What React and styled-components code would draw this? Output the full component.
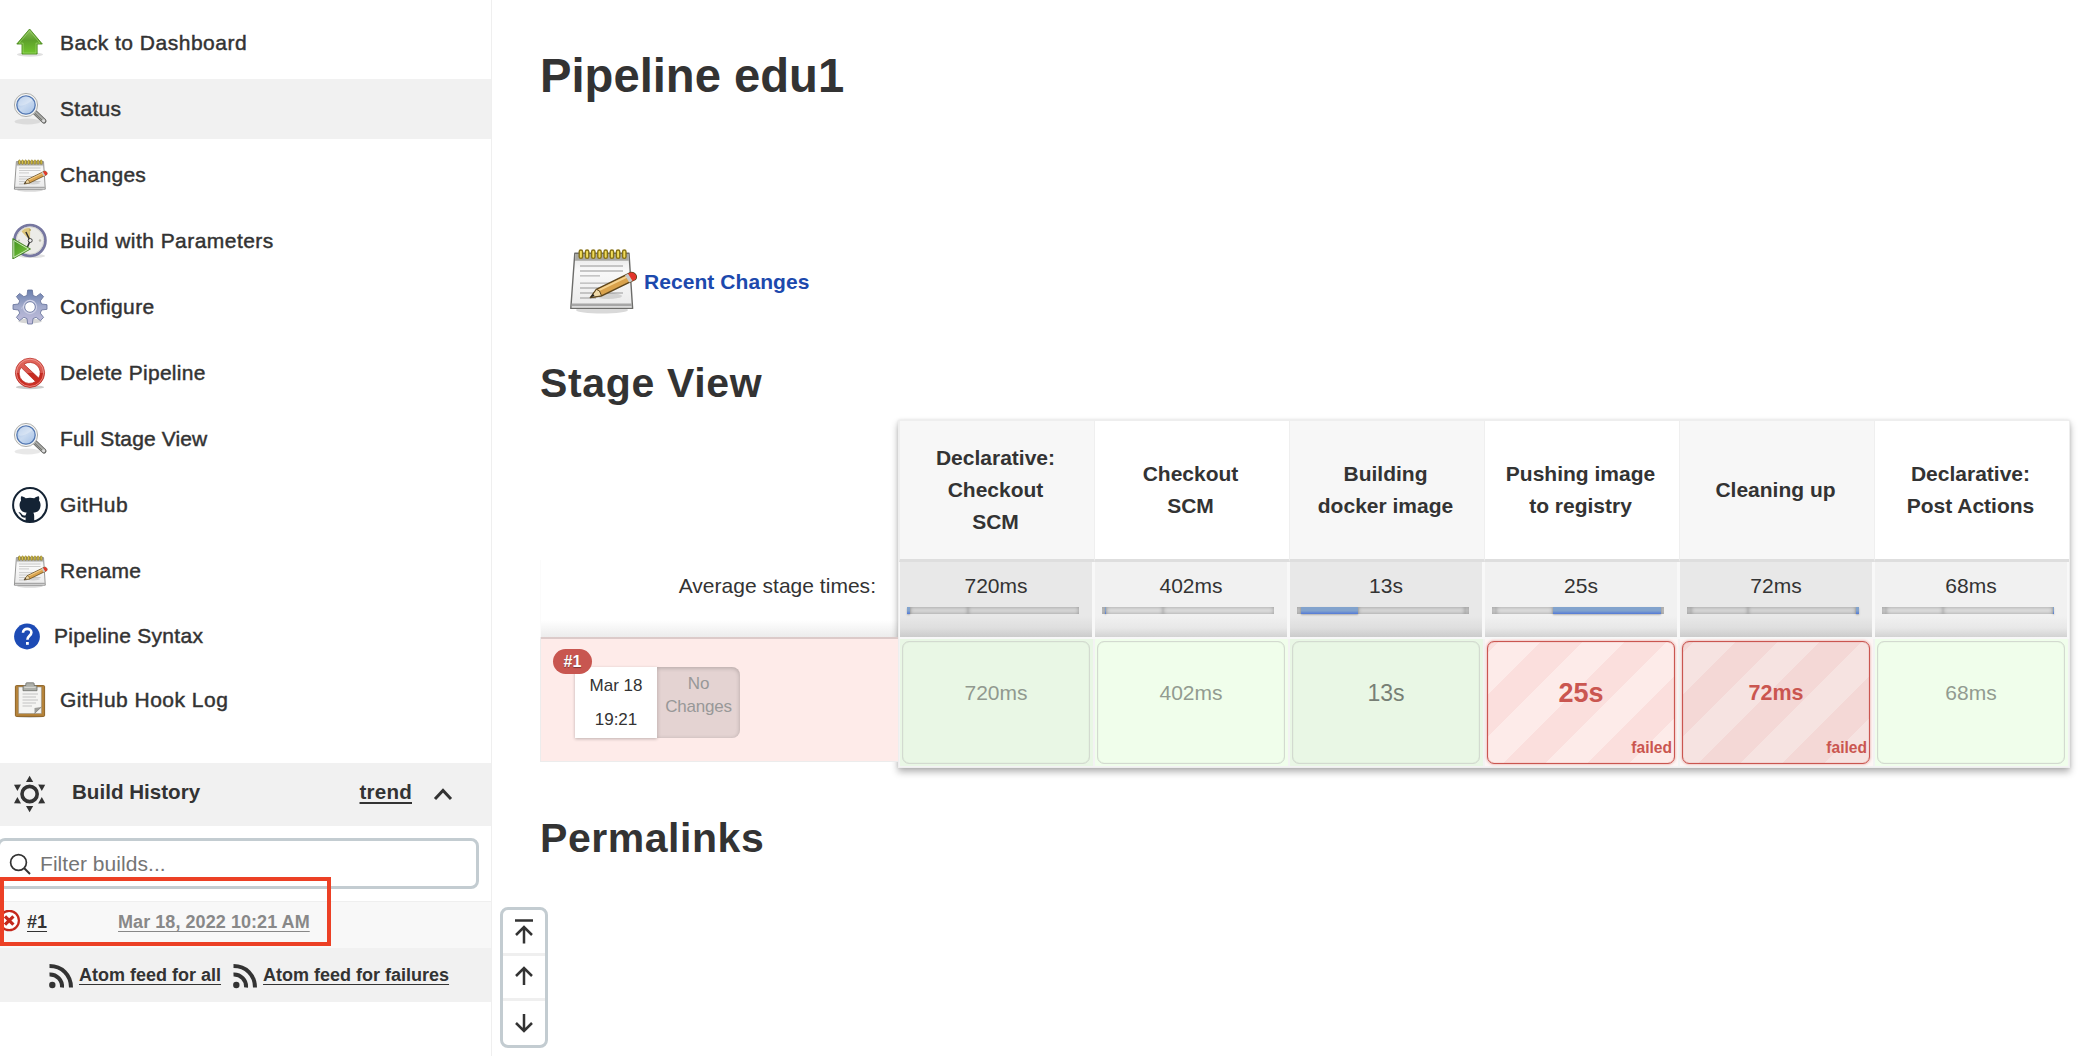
import React from "react";
import styled, { createGlobalStyle, css } from "styled-components";

const GlobalStyle = createGlobalStyle`
  *, *::before, *::after { box-sizing: border-box; }
  body {
    margin: 0;
    background: #fff;
    color: #333;
    font-family: "Liberation Sans", Arial, sans-serif;
    font-size: 21px;
    overflow: hidden;
  }
`;

/* ---------- layout ---------- */

const Page = styled.div`
  position: relative;
  display: flex;
  width: 2092px;
  height: 1056px;
  overflow: hidden;
`;

const Sidebar = styled.aside`
  flex: 0 0 492px;
  border-right: 1px solid #efefef;
  padding-top: 13px;
`;

const Main = styled.main`
  flex: 1;
  padding: 46px 22px 0 48px;
`;

/* ---------- task list ---------- */

const TaskList = styled.nav`
  display: flex;
  flex-direction: column;
  gap: 6px;
  height: 750px;
`;

const Task = styled.a`
  display: flex;
  align-items: center;
  flex: none;
  height: ${(p) => p.$height || 60}px;
  padding-left: 12px;
  gap: 12px;
  background: ${(p) => (p.$active ? "#f1f1f1" : "transparent")};
  letter-spacing: ${(p) => p.$track ?? 0.3}px;
  -webkit-text-stroke: 0.45px #333;
  svg { flex: none; }
`;

/* ---------- build history ---------- */

const HistoryHeader = styled.div`
  display: flex;
  align-items: center;
  height: 63px;
  padding: 0 38px 2px 12px;
  background: #f1f1f1;
  font-weight: bold;
  font-size: 20.6px;
`;

const HistoryTitle = styled.span`
  margin: -4px auto 0 24px;
`;

const TrendLink = styled.a`
  margin: -4px 21px 0 0;
  letter-spacing: 0.2px;
  text-decoration: underline;
  text-decoration-thickness: 2px;
  text-underline-offset: 3px;
`;

const FilterBox = styled.div`
  display: flex;
  align-items: center;
  width: 482px;
  height: 51px;
  margin: 12px 0 12px -3px;
  padding-left: 9px;
  border: 3px solid #c3ccd1;
  border-radius: 8px;
  gap: 9px;
  color: #757575;
  letter-spacing: 0.05px;
  span { padding-top: 1px; }
`;

const BuildRow = styled.div`
  display: flex;
  align-items: center;
  height: 47px;
  padding-bottom: 6px;
  border-top: 1px solid #efefef;
  background: #f8f8f8;
  font-weight: bold;
  font-size: 18px;
`;

const BuildLink = styled.a`
  margin-left: 7px;
  text-decoration: underline;
  text-decoration-thickness: 1px;
  text-underline-offset: 3px;
`;

const BuildDate = styled(BuildLink)`
  margin-left: 71px;
  color: #888;
  letter-spacing: 0.06px;
`;

const Feeds = styled.div`
  display: flex;
  align-items: center;
  height: 54px;
  padding: 1px 0 0 48px;
  background: #f1f1f1;
  font-weight: bold;
  font-size: 18px;
`;

const FeedLink = styled.a`
  margin: 0 11px 0 5px;
  text-decoration: underline;
  text-decoration-thickness: 1px;
  text-underline-offset: 3px;
`;

const Highlight = styled.div`
  position: absolute;
  left: 0;
  top: 877px;
  width: 331px;
  height: 69px;
  border: 4px solid #ec4025;
`;

/* ---------- floating scroller ---------- */

const Scroller = styled.div`
  position: absolute;
  left: 500px;
  top: 907px;
  width: 48px;
  height: 141px;
  display: grid;
  grid-template-rows: 43px 45px 47px;
  border: 3px solid #c3ccd1;
  border-radius: 8px;
  background: #fff;
`;

const ScrollButton = styled.div`
  display: flex;
  align-items: center;
  justify-content: center;
  & + & { border-top: 3px solid #efefef; }
`;

/* ---------- main column ---------- */

const Title = styled.h1`
  height: 60px;
  margin: 0 0 140px;
  font-size: 47.2px;
  line-height: 60px;
`;

const Recent = styled.a`
  display: flex;
  align-items: center;
  height: 72px;
  margin-bottom: 40px;
  padding-left: 26px;
  gap: 6px;
  color: #1c49ad;
  font-weight: bold;
  letter-spacing: 0.06px;
  svg { margin-top: -4px; }
`;

const SectionTitle = styled.h2`
  height: 50px;
  margin: 0;
  font-size: 41px;
  line-height: 50px;
  letter-spacing: ${(p) => p.$track || 0}px;
`;

const StageView = styled.section`
  display: flex;
  width: 1530px;
  height: 349px;
  margin: 11px 0 45px;
`;

const RunColumn = styled.div`
  flex: 0 0 358px;
  padding-top: 141px;
`;

const AverageLabel = styled.div`
  height: 77px;
  padding: 14px 22px 0 0;
  line-height: 24px;
  text-align: right;
  border-left: 1px solid #fbfbfb;
  background: linear-gradient(#fff 78%, #ececec);
  letter-spacing: 0.02px;
`;

const RunSummary = styled.div`
  position: relative;
  height: 125px;
  padding: 30px 0 0 34px;
  border: solid #ececec;
  border-width: 0 0 1px 1px;
  background: #feebe9;
  box-shadow: inset 0 2px 0 #dccac9;
`;

const RunBadge = styled.span`
  position: absolute;
  left: 12px;
  top: 12px;
  width: 39px;
  height: 25px;
  border-radius: 13px;
  background: #c85650;
  color: #fff;
  font: bold 16px/25px "Liberation Sans", Arial, sans-serif;
  text-align: center;
  text-shadow: 0 1px 1px rgba(0, 0, 0, 0.4);
`;

const RunInfo = styled.div`
  display: flex;
  height: 71px;
  font-size: 17px;
  text-align: center;
`;

const RunDate = styled.div`
  width: 82px;
  padding-top: 2px;
  background: #fff;
  line-height: 34px;
  box-shadow: 0 1px 3px rgba(0, 0, 0, 0.25);
`;

const RunChanges = styled.div`
  width: 83px;
  padding: 5px 8px 0;
  border-radius: 0 8px 8px 0;
  background: #e4d3d2;
  color: #989898;
  line-height: 23px;
  letter-spacing: -0.2px;
  box-shadow: inset 0 1px 4px rgba(0, 0, 0, 0.22);
`;

const StageTable = styled.div`
  width: 1172px;
  height: 348px;
  margin-top: 1px;
  display: grid;
  grid-template-columns: repeat(6, 195px);
  grid-template-rows: 141px 77px 128px;
  border: 1px solid #eee;
  background: #fff;
  box-shadow: 0 4px 7px rgba(0, 0, 0, 0.3), 0 0 3px rgba(0, 0, 0, 0.1);
`;

const HeadCell = styled.div`
  display: flex;
  align-items: center;
  justify-content: center;
  padding: 0 21px 0 18px;
  border-left: 1px solid #efefef;
  border-bottom: 3px solid #dedede;
  background: ${(p) => (p.$alt ? "#f7f7f7" : "#fff")};
  font-weight: bold;
  font-size: 21px;
  line-height: 31.8px;
  text-align: center;
  white-space: pre;
`;

const AverageCell = styled.div`
  padding: 11px 13px 0 7px;
  border: solid #f8f8f8;
  border-width: 0 2px 2px 1px;
  background: linear-gradient(
    ${(p) => (p.$alt ? "#e8e8e8 72%, #dedede 88%, #cbcbcb" : "#f1f1f1 72%, #e8e8e8 88%, #d2d2d2")}
  );
`;

const AverageTime = styled.div`
  padding-left: 6px;
  line-height: 26px;
  text-align: center;
`;

const Timeline = styled.div`
  display: flex;
  height: 7px;
  margin-top: 8px;
  background: ${(p) => (p.$alt ? "#dadada" : "#e0e0e0")};
`;

const Segment = styled.div`
  flex: ${(p) => p.$size} 0 0;
  ${(p) =>
    p.$fill
      ? css`
          background: linear-gradient(#82a3cd 55%, #5379d6);
          box-shadow: 0 1px 2px rgba(0, 0, 0, 0.25);
        `
      : css`
          box-shadow: inset 0 0 4px rgba(0, 0, 0, 0.32);
        `}
`;

const ResultCell = styled.div`
  padding: 2px 3px 2px 2px;
  border: solid #f3f3f3;
  border-width: 0 1px 1px 1px;
  background: ${(p) => (p.$failed ? "#fdf6f5" : p.$alt ? "#e9f7e5" : "#f0feeb")};
`;

const stripes = (light, dark) =>
  `repeating-linear-gradient(135deg, ${dark} 0 7.3px, ${light} 7.3px 37px, ${dark} 37px 59.4px)`;

const ResultCard = styled.div`
  position: relative;
  height: 123px;
  padding-top: 37px;
  border: 1px solid #d3dad0;
  box-shadow: inset 0 0 1px rgba(0, 0, 0, 0.2);
  border-radius: 7px;
  background: ${(p) => (p.$alt ? "#e9f7e5" : "#f0feeb")};
  color: ${(p) => p.$color};
  font-size: ${(p) => p.$size}px;
  line-height: 28px;
  text-align: center;
  ${(p) =>
    p.$failed &&
    css`
      border-color: #ca5650;
      background: ${p.$alt ? stripes("#f6e3e1", "#f4d8d6") : stripes("#fdebe9", "#fbdfdd")};
      box-shadow: 0 0 3px rgba(202, 86, 80, 0.6), inset 0 0 1px #ca5650;
      font-weight: bold;
    `}
`;

const FailedTag = styled.span`
  position: absolute;
  right: 2px;
  bottom: 1px;
  font-size: 15.6px;
`;

/* ---------- icons ---------- */

const UpArrowIcon = () => (
  <svg width="36" height="36" viewBox="0 0 36 36">
    <defs>
      <linearGradient id="up" x1="0" y1="0" x2="0" y2="1">
        <stop offset="0" stopColor="#8fbf60" /><stop offset=".45" stopColor="#5da02b" /><stop offset="1" stopColor="#72c62e" />
      </linearGradient>
    </defs>
    <ellipse cx="18" cy="29.5" rx="13" ry="2.2" fill="#000" opacity=".12" />
    <path d="M17.6 4 30.3 19h-5.2v10H10V19H4.8z" fill="url(#up)" stroke="#4a8a1c" strokeWidth=".9" />
    <path d="M17.6 5.8 28 18.1h-4v9.9H11.1v-9.9H7z" fill="none" stroke="#a7dc78" strokeWidth=".7" opacity=".8" />
  </svg>
);

const MagnifierIcon = () => (
  <svg width="36" height="36" viewBox="0 0 36 36">
    <defs>
      <linearGradient id="lens" x1="0" y1="0" x2=".8" y2="1">
        <stop offset="0" stopColor="#9dbbe4" /><stop offset=".55" stopColor="#c9daf0" /><stop offset="1" stopColor="#a9c4e8" />
      </linearGradient>
    </defs>
    <ellipse cx="15.5" cy="30.5" rx="13" ry="3" fill="#000" opacity=".09" />
    <path d="m22.5 21 9.5 9" stroke="#5d5d5b" strokeWidth="5" strokeLinecap="round" />
    <path d="m22.5 21 9.3 8.8" stroke="#a9aaa6" strokeWidth="3.4" strokeLinecap="round" />
    <path d="m23 22.4 7.3 7" stroke="#6e6f6c" strokeWidth="1" />
    <circle cx="31.6" cy="29.7" r="1.5" fill="#ddd" />
    <circle cx="14" cy="14" r="11.6" fill="#f5f5f3" stroke="#9b9c99" strokeWidth=".8" />
    <circle cx="14" cy="14" r="9.2" fill="url(#lens)" stroke="#5277b2" strokeWidth="1.3" />
    <path d="M6.5 14c3 2 9-1 14-5-2.500-3.500-7-4.500-10-3-2.600 1.400-4 4-4 8z" fill="#fff" opacity=".3" />
  </svg>
);

const NotepadIcon = ({ size = 36 }) => (
  <svg width={size} height={size} viewBox="0 0 36 36">
    <defs>
      <linearGradient id="paper" x1="0" y1="0" x2="0" y2="1">
        <stop offset="0" stopColor="#e4e4e4" /><stop offset=".3" stopColor="#f9f9f9" /><stop offset="1" stopColor="#eaeaea" />
      </linearGradient>
    </defs>
    <ellipse cx="18" cy="33" rx="13" ry="1.800" fill="#000" opacity=".15" />
    <path d="M4.400 4.600 31.500 4.600 33.300 32.200H2.400z" fill="url(#paper)" stroke="#6c6c6a" strokeWidth=".7" strokeLinejoin="round" />
    <path d="M4.700 5h26.500l.2 3.400H4.500z" fill="#a8a8a4" />
    <path d="M2.900 29.800h30v1.300h-30z" fill="#a6a6a6" />
    <path d="M7 11h21.500M7 13.500h21.500M7 15.900h10M7 19.600h15M7 22h12M7 24.500h21.500M7 27h8" stroke="#b5b5b5" strokeWidth=".65" />
    {[6.6, 9.7, 12.8, 15.9, 19, 22.1, 25.2, 28.3].map((x) => (
      <rect key={x} x={x} y="3" width="1.700" height="4.200" rx=".85" fill="#f0dc5a" stroke="#857014" strokeWidth=".7" />
    ))}
    <ellipse cx="21" cy="26" rx="7" ry="1.500" fill="#000" opacity=".12" />
    <path d="m12.200 26.800 3-4.100L32 14.400c2-.8 4 1.600 2.700 3.300L17.800 25.900z" fill="#d9a24c" stroke="#5d451c" strokeWidth=".75" strokeLinejoin="round" />
    <path d="m16 23.300 15.300-7.400" stroke="#f5d28e" strokeWidth="1" />
    <path d="m12.200 26.800 3-4.100 1.500.7 1.100 2.500z" fill="#efd9a8" stroke="#5d451c" strokeWidth=".5" />
    <path d="m12.200 26.800 1.300-1.900.8 1.100z" fill="#222" />
    <path d="m31 14.900 1-.5c2-.8 4 1.600 2.700 3.300l-1.500.8z" fill="#e3362c" />
    <path d="m29.500 15.600 1.500-.7 2.200 3.600-1.600.8z" fill="#c9c9c9" />
  </svg>
);

const ClockPlayIcon = () => (
  <svg width="36" height="36" viewBox="0 0 36 36">
    <defs>
      <linearGradient id="play" x1="0" y1="0" x2="1" y2="1">
        <stop offset="0" stopColor="#3f8f1c" /><stop offset="1" stopColor="#82cf45" />
      </linearGradient>
    </defs>
    <ellipse cx="20" cy="33" rx="13" ry="2" fill="#000" opacity=".12" />
    <circle cx="18" cy="17.500" r="15.400" fill="#ecece8" stroke="#7677a0" strokeWidth="2.800" />
    <circle cx="18" cy="17.500" r="13.700" fill="none" stroke="#c9c9c4" strokeWidth=".7" />
    <path d="M18 17.500 9.500 8.500c2-2.600 5-3.700 8.700-3.300z" fill="#dcc57a" />
    <path d="m17.800 17-3.900-8M18 18l-2.500 6" stroke="#2c2c2c" strokeWidth="1.500" />
    <circle cx="18.200" cy="17.500" r="2" fill="#eee" stroke="#333" strokeWidth=".9" />
    <circle cx="28" cy="17.500" r="1.200" fill="#bdbdb2" /><circle cx="7" cy="17.500" r="1" fill="#bdbdb2" /><circle cx="18" cy="7" r="1" fill="#b3a460" />
    <path d="M.8 15.500 18.500 26 .8 36z" fill="url(#play)" stroke="#3d7a1c" strokeWidth=".8" />
    <path d="M1.800 17.400 16.500 26 1.800 34.300z" fill="none" stroke="#e5f6da" strokeWidth=".8" />
  </svg>
);

const GearIcon = () => (
  <svg width="36" height="36" viewBox="0 0 36 36">
    <defs>
      <linearGradient id="gear" x1="0" y1="0" x2="0" y2="1">
        <stop offset="0" stopColor="#6a7fae" /><stop offset=".5" stopColor="#a3abcc" /><stop offset="1" stopColor="#c3bedd" />
      </linearGradient>
    </defs>
    <ellipse cx="18" cy="32" rx="12" ry="2.500" fill="#000" opacity=".16" />
    <g fill="url(#gear)" stroke="#626f98" strokeWidth=".8" strokeLinejoin="round">
      <path
        fillRule="evenodd"
        d="M15.700 1h4.600l.7 5.400 3.100 1.300 4.300-3.300 3.200 3.200-3.300 4.300 1.300 3.100 5.400.7v4.600l-5.400.7-1.300 3.100 3.300 4.300-3.200 3.200-4.300-3.300-3.100 1.300-.7 5.400h-4.600l-.7-5.400-3.100-1.300-4.300 3.300-3.200-3.200 3.300-4.300-1.300-3.100-5.400-.7v-4.600l5.400-.7 1.300-3.100-3.300-4.300 3.200-3.200 4.300 3.300 3.100-1.300zM18 12.700a5.300 5.300 0 1 0 0 10.600 5.300 5.300 0 0 0 0-10.600z"
      />
    </g>
    <circle cx="18" cy="18" r="6.600" fill="none" stroke="#cfd1e6" strokeWidth="1.100" />
    <path d="M9.500 20c2-6 8-4 13-8" stroke="#fff" strokeWidth="1.500" fill="none" opacity=".22" />
  </svg>
);

const DeleteIcon = () => (
  <svg width="36" height="36" viewBox="0 0 36 36">
    <defs>
      <linearGradient id="del" x1="0" y1="0" x2="0" y2="1">
        <stop offset="0" stopColor="#e3695f" /><stop offset=".5" stopColor="#d8564d" /><stop offset=".52" stopColor="#c42a20" /><stop offset="1" stopColor="#cf2f25" />
      </linearGradient>
    </defs>
    <ellipse cx="18" cy="32.200" rx="14" ry="2" fill="#000" opacity=".2" />
    <path
      fill="url(#del)"
      stroke="#b5241b"
      strokeWidth=".7"
      fillRule="evenodd"
      d="M18 3.200a14.600 14.600 0 1 0 0 29.200 14.600 14.600 0 0 0 0-29.200zM12 9.300l14.700 13.800A10.300 10.300 0 0 0 12 9.300zM9 12.300a10.300 10.300 0 0 0 14.500 14.200z"
    />
    <circle cx="18" cy="17.800" r="13.600" fill="none" stroke="#f3a9a3" strokeWidth=".7" />
  </svg>
);

const GitHubIcon = () => (
  <svg width="36" height="36" viewBox="0 0 36 36">
    <circle cx="18" cy="18" r="16.900" fill="#fff" stroke="#142334" strokeWidth="2" />
    <path
      fill="#142334"
      d="M9.200 9.200c1.800 0 3.600 1.200 4.500 2 2.600-.7 6-.7 8.600 0 .9-.8 2.700-2 4.500-2 .7 1.700.5 3.200.2 4.200 1.300 1.600 1.700 3.400 1.500 5.600-.4 4.600-3.200 6.300-7.200 6.800.5.800.9 1.700.9 2.900v5.500c-2.700.9-6 .9-8.600 0v-3.600c-3.900.5-4.500-1.800-5.400-3.300-.5-.8-1.300-1.300-1.700-1.900.9-.3 2 .2 2.800 1.200 1.200 1.600 2.100 2.300 4.400 1.600.1-1 .5-1.800 1.100-2.400-4-.5-6.800-2.200-7.200-6.800-.2-2.200.2-4 1.500-5.600-.3-1-.5-2.500.1-4.200z"
    />
  </svg>
);

const HelpIcon = () => (
  <svg width="30" height="30" viewBox="0 0 30 30">
    <circle cx="15" cy="15.500" r="12.900" fill="#1d4bb5" />
    <path d="M11 11.800c0-5.200 8.400-5.200 8.400-.3 0 3.200-4 3.400-4 7.200" fill="none" stroke="#fff" strokeWidth="2.600" />
    <rect x="14" y="21" width="2.800" height="2.800" fill="#fff" />
  </svg>
);

const ClipboardIcon = () => (
  <svg width="36" height="36" viewBox="0 0 36 36">
    <ellipse cx="18" cy="34.500" rx="14" ry="1.500" fill="#000" opacity=".18" />
    <rect x="3.400" y="3.600" width="29.200" height="30.800" rx="1" fill="#b5833a" stroke="#85591b" strokeWidth=".9" />
    <path d="M6.600 5h22.800v26.500H6.600z" fill="#f4f4f2" stroke="#8f8f88" strokeWidth=".5" />
    <path d="M22.500 31.500v-5.500l6.900-1z" fill="#9d9d99" /><path d="m29.400 25-6.900 6.500" stroke="#666" strokeWidth=".6" />
    <path d="M10.500 12h15.500M10.500 15h13.500M10.500 18h15.500M10.500 21h13.500M10.500 24h9.500" stroke="#c2c2c2" strokeWidth="1.200" />
    <path d="M11 8.700V5c0-.9.700-1.500 1.600-1.500h1.200V1.700c0-.5.400-.9.900-.9h6.600c.5 0 .9.400.9.900v1.800h1.200c.9 0 1.600.6 1.600 1.500v3.700z" fill="#adafa9" stroke="#6d6f69" strokeWidth=".8" />
    <path d="M12.300 5.300h11.400" stroke="#dcdcd8" strokeWidth="1" />
  </svg>
);

const SunIcon = () => (
  <svg width="36" height="38" viewBox="0 0 36 38">
    <circle cx="17.600" cy="19" r="7.600" fill="none" stroke="#333" strokeWidth="3.600" />
    <g fill="#333">
      <path d="M17.600.8 21.200 7H14z" /><path d="M17.600 37.200 21.200 31H14z" />
      <path d="m2 9.700 7-.1-3.600 6.300z" /><path d="m33.200 9.700-7-.1 3.600 6.300z" />
      <path d="m2 28.300 7 .1-3.600-6.300z" /><path d="m33.200 28.300-7 .1 3.600-6.300z" />
    </g>
  </svg>
);

const ChevronIcon = () => (
  <svg width="20" height="14" viewBox="0 0 20 14">
    <path d="m2 12 8-8.500L18 12" fill="none" stroke="#333" strokeWidth="3" />
  </svg>
);

const SearchIcon = () => (
  <svg width="22" height="22" viewBox="0 0 22 22">
    <circle cx="9.500" cy="9.500" r="7.900" fill="none" stroke="#333" strokeWidth="1.700" />
    <path d="m15 15 6 6" stroke="#333" strokeWidth="1.900" />
  </svg>
);

const FailedIcon = () => (
  <svg width="20" height="24" viewBox="0 0 20 24">
    <circle cx="9.200" cy="10.500" r="9.700" fill="#fff" stroke="#c4281c" strokeWidth="2.200" />
    <path d="m5 6.300 8.400 8.400m0-8.400-8.400 8.400" stroke="#c4281c" strokeWidth="3.200" />
  </svg>
);

const FeedIcon = () => (
  <svg width="26" height="26" viewBox="0 0 26 26">
    <circle cx="4.300" cy="22" r="3.200" fill="#333" />
    <path d="M1.500 11.500A12 12 0 0 1 14 24.500M1.500 3C14 3 23 12 23 24.500" fill="none" stroke="#333" strokeWidth="4" />
  </svg>
);

const arrows = {
  top: "M5 2.500h18M14 9.500v16M6 17l8-8 8 8",
  up: "M14 5v17M6 13l8-8 8 8",
  down: "M14 5v17M6 14l8 8 8-8",
};

const ArrowIcon = ({ kind }) => (
  <svg width="28" height="28" viewBox="0 0 28 28">
    <path d={arrows[kind]} fill="none" stroke="#333" strokeWidth="2.500" />
  </svg>
);

/* ---------- data ---------- */

const tasks = [
  { label: "Back to Dashboard", Icon: UpArrowIcon, track: 0.5 },
  { label: "Status", Icon: MagnifierIcon, active: true },
  { label: "Changes", Icon: NotepadIcon },
  { label: "Build with Parameters", Icon: ClockPlayIcon, track: 0.45 },
  { label: "Configure", Icon: GearIcon, track: 0.4 },
  { label: "Delete Pipeline", Icon: DeleteIcon },
  { label: "Full Stage View", Icon: MagnifierIcon, track: 0.12 },
  { label: "GitHub", Icon: GitHubIcon, track: 0.45 },
  { label: "Rename", Icon: NotepadIcon },
  { label: "Pipeline Syntax", Icon: HelpIcon, height: 58 },
  { label: "GitHub Hook Log", Icon: ClipboardIcon, height: 58, track: 0.48 },
];

const stages = [
  { name: "Declarative:\nCheckout\nSCM", time: "720ms", bar: [[3, 1], [58], [112]], color: "#91998f" },
  { name: "Checkout\nSCM", time: "402ms", bar: [[3], [1, 1], [57], [112]], color: "#929b90" },
  { name: "Building\ndocker image", time: "13s", bar: [[4], [57, 1], [108], [4]], color: "#777f75", size: 23 },
  { name: "Pushing image\nto registry", time: "25s", bar: [[4], [57], [109, 1], [3]], color: "#ca5650", size: 27, failed: true },
  { name: "Cleaning up", time: "72ms", bar: [[4], [57], [109], [3, 1]], color: "#ca5650", size: 21.5, failed: true },
  { name: "Declarative:\nPost Actions", time: "68ms", bar: [[4], [57], [111], [1, 1]], color: "#929b90" },
];

export default function App() {
  return (
    <Page>
      <GlobalStyle />
      <Sidebar>
        <TaskList>
          {tasks.map(({ label, Icon, active, height, track }) => (
            <Task key={label} $active={active} $height={height} $track={track}>
              <Icon />
              {label}
            </Task>
          ))}
        </TaskList>
        <HistoryHeader>
          <SunIcon />
          <HistoryTitle>Build History</HistoryTitle>
          <TrendLink>trend</TrendLink>
          <ChevronIcon />
        </HistoryHeader>
        <FilterBox>
          <SearchIcon />
          <span>Filter builds...</span>
        </FilterBox>
        <BuildRow>
          <FailedIcon />
          <BuildLink>#1</BuildLink>
          <BuildDate>Mar 18, 2022 10:21 AM</BuildDate>
        </BuildRow>
        <Feeds>
          <FeedIcon />
          <FeedLink>Atom feed for all</FeedLink>
          <FeedIcon />
          <FeedLink>Atom feed for failures</FeedLink>
        </Feeds>
      </Sidebar>

      <Main>
        <Title>Pipeline edu1</Title>
        <Recent>
          <NotepadIcon size={72} />
          Recent Changes
        </Recent>
        <SectionTitle $track={0.65}>Stage View</SectionTitle>
        <StageView>
          <RunColumn>
            <AverageLabel>Average stage times:</AverageLabel>
            <RunSummary>
              <RunInfo>
                <RunDate>
                  <div>Mar 18</div>
                  <div>19:21</div>
                </RunDate>
                <RunChanges>No Changes</RunChanges>
              </RunInfo>
              <RunBadge>#1</RunBadge>
            </RunSummary>
          </RunColumn>
          <StageTable>
            {stages.map((s, i) => (
              <HeadCell key={s.name} $alt={i % 2 === 0}>{s.name}</HeadCell>
            ))}
            {stages.map((s, i) => (
              <AverageCell key={s.name} $alt={i % 2 === 0}>
                <AverageTime>{s.time}</AverageTime>
                <Timeline $alt={i % 2 === 0}>
                  {s.bar.map(([size, fill], n) => (
                    <Segment key={n} $size={size} $fill={fill} />
                  ))}
                </Timeline>
              </AverageCell>
            ))}
            {stages.map((s, i) => (
              <ResultCell key={s.name} $alt={i % 2 === 0} $failed={s.failed}>
                <ResultCard $alt={i % 2 === 0} $failed={s.failed} $color={s.color} $size={s.size || 21}>
                  {s.time}
                  {s.failed && <FailedTag>failed</FailedTag>}
                </ResultCard>
              </ResultCell>
            ))}
          </StageTable>
        </StageView>
        <SectionTitle $track={0.55}>Permalinks</SectionTitle>
      </Main>

      <Scroller>
        <ScrollButton><ArrowIcon kind="top" /></ScrollButton>
        <ScrollButton><ArrowIcon kind="up" /></ScrollButton>
        <ScrollButton><ArrowIcon kind="down" /></ScrollButton>
      </Scroller>
      <Highlight />
    </Page>
  );
}
